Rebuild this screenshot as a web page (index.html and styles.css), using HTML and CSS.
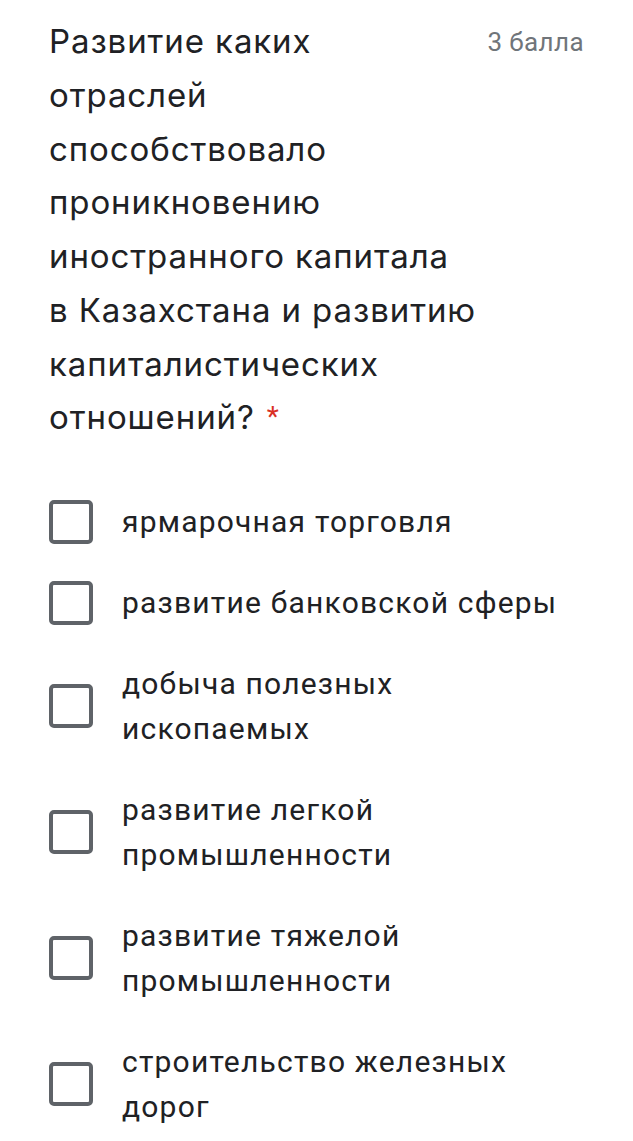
FILE: index.html
```html
<!DOCTYPE html>
<html lang="ru">
<head>
<meta charset="utf-8">
<link rel="stylesheet" href="styles.css">
</head>
<body>
<div class="question">
  <div class="header">
    <div class="title">Развитие каких отраслей способствовало проникновению иностранного капитала в&nbsp;Казахстана и развитию капиталистических отношений?<span class="req">*</span></div>
    <div class="points">3 балла</div>
  </div>
  <div class="options">
    <label class="option"><span class="box"></span><span class="label">ярмарочная торговля</span></label>
    <label class="option"><span class="box"></span><span class="label">развитие банковской сферы</span></label>
    <label class="option"><span class="box"></span><span class="label">добыча полезных ископаемых</span></label>
    <label class="option"><span class="box"></span><span class="label">развитие легкой промышленности</span></label>
    <label class="option"><span class="box"></span><span class="label">развитие тяжелой промышленности</span></label>
    <label class="option"><span class="box"></span><span class="label">строительство железных дорог</span></label>
  </div>
</div>
</body>
</html>
```

FILE: styles.css
```css
html, body {
  margin: 0;
  padding: 0;
  background: #ffffff;
}
body {
  font-family: Roboto, "Liberation Sans", sans-serif;
  color: #202124;
}
.question {
  padding: 15px 49px 0 49px;
}
.header {
  display: flex;
  align-items: flex-start;
}
.title {
  width: 430px;
  font-family: Inter, Roboto, sans-serif;
  font-size: 33px;
  line-height: 53.75px;
  color: #202124;
  letter-spacing: 0.9px;
}
.req {
  display: inline-block;
  margin-left: 12px;
  color: #d93025;
  font-family: Roboto, sans-serif;
  font-size: 28px;
  line-height: 1;
  letter-spacing: 0;
  vertical-align: 3px;
}
.points {
  margin-left: auto;
  font-size: 26px;
  line-height: 54px;
  letter-spacing: 0.4px;
  color: #70757a;
  white-space: nowrap;
}
.options {
  margin-top: 54px;
  display: flex;
  flex-direction: column;
  gap: 36px;
}
.option {
  display: flex;
  align-items: center;
  gap: 29px;
}
.box {
  flex: none;
  width: 44px;
  height: 44px;
  box-sizing: border-box;
  border: 4px solid #5f6368;
  border-radius: 5px;
}
.label {
  font-size: 30px;
  line-height: 45px;
  letter-spacing: 1.2px;
  color: #202124;
  max-width: 462px;
}
```
